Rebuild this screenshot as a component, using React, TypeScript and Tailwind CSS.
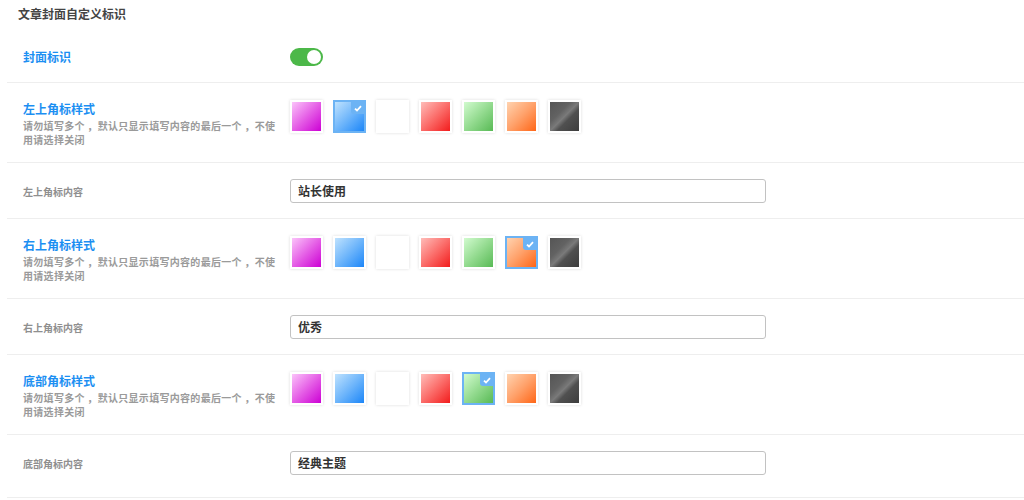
import React from 'react'

// --- Swatch data ---
const swatches = [
    'bg-[linear-gradient(135deg,#fbc4fa_0%,#e55fe6_50%,#cc00d4_100%)]',
    'bg-[linear-gradient(135deg,#bfe2fe_0%,#6fb6fb_50%,#1c86f8_100%)]',
    'bg-white',
    'bg-[linear-gradient(135deg,#ffbdb9_0%,#fb6d6a_50%,#f21c1c_100%)]',
    'bg-[linear-gradient(135deg,#d2fbcf_0%,#94db90_50%,#58ba55_100%)]',
    'bg-[linear-gradient(135deg,#ffd3b0_0%,#ffa16a_50%,#ff6617_100%)]',
    'bg-[linear-gradient(135deg,#555_0%,#626262_35%,#7a7a7a_50%,#505050_62%,#3d3d3d_100%)]',
]

const Swatch: React.FC<{ bg: string; selected?: boolean }> = ({ bg, selected }) => (
    <div
        className={`relative w-[33px] h-[33px] shrink-0 ${
            selected
                ? 'border-2 border-[#6cb3f4]'
                : 'p-[2px] bg-white shadow-[0_0_3px_rgba(0,0,0,0.14)]'
        }`}
    >
        <div className={`w-full h-full ${bg}`} />
        {selected && (
            <div className="absolute top-0 right-0 w-[13px] h-[12px] bg-[#6cb3f4] rounded-bl-[3px] flex items-center justify-center">
                <svg width="8" height="7" viewBox="0 0 8 7">
                    <path d="M1 3.6 L3 5.5 L7 1.2" fill="none" stroke="#fff" strokeWidth="1.8" />
                </svg>
            </div>
        )}
    </div>
)

const StyleRow: React.FC<{ label: string; selected: number }> = ({ label, selected }) => (
    <div className="flex border-b border-[#eeeeee] pt-[18px] pb-[15px]">
        <div className="w-[283px] shrink-0 pl-4">
            <div className="text-[12px] leading-[16px] font-bold text-[#1c8ff2]">{label}</div>
            <div className="mt-[2px] whitespace-nowrap text-[10px] leading-[14px] tracking-[0.3px] font-bold text-[#9a9a9a]">
                请勿填写多个&nbsp;，默认只显示填写内容的最后一个&nbsp;，不使
                <br />
                用请选择关闭
            </div>
        </div>
        <div className="flex gap-[10px] -mt-[1px]">
            {swatches.map((bg, i) => (
                <Swatch key={i} bg={bg} selected={i === selected} />
            ))}
        </div>
    </div>
)

const ContentRow: React.FC<{ label: string; value: string; last?: boolean }> = ({ label, value, last }) => (
    <div className={`flex items-center border-b border-[#eeeeee] pt-4 ${last ? 'pb-[22px]' : 'pb-[15px]'}`}>
        <div className="w-[283px] shrink-0 pl-4 text-[10px] font-bold text-[#8f8f8f]">{label}</div>
        <div className="w-[476px] h-[24px] border border-[#c2c2c2] rounded-[3px] flex items-center pl-[7px] text-[12px] font-bold text-[#333]">
            {value}
        </div>
    </div>
)

export default function App() {
    return (
        <div className="w-[1024px] h-[500px] bg-white overflow-hidden font-['Noto_Sans_CJK_SC',sans-serif]">
            <div className="pl-[18px] pt-[7px] text-[12px] leading-[14px] font-bold text-[#444]">
                文章封面自定义标识
            </div>
            <div className="ml-[7px]">
                {/* Toggle row */}
                <div className="flex items-center border-b border-[#eeeeee] pt-[27px] pb-[16px]">
                    <div className="w-[283px] shrink-0 pl-4 text-[12px] font-bold text-[#1c8ff2]">封面标识</div>
                    <div className="w-[33px] h-[18px] rounded-full bg-[#4cb849] flex items-center justify-end pr-[2px]">
                        <div className="w-[14px] h-[14px] rounded-full bg-white" />
                    </div>
                </div>

                <StyleRow label="左上角标样式" selected={1} />
                <ContentRow label="左上角标内容" value="站长使用" />
                <StyleRow label="右上角标样式" selected={5} />
                <ContentRow label="右上角标内容" value="优秀" />
                <StyleRow label="底部角标样式" selected={4} />
                <ContentRow label="底部角标内容" value="经典主题" last />
            </div>
        </div>
    )
}
